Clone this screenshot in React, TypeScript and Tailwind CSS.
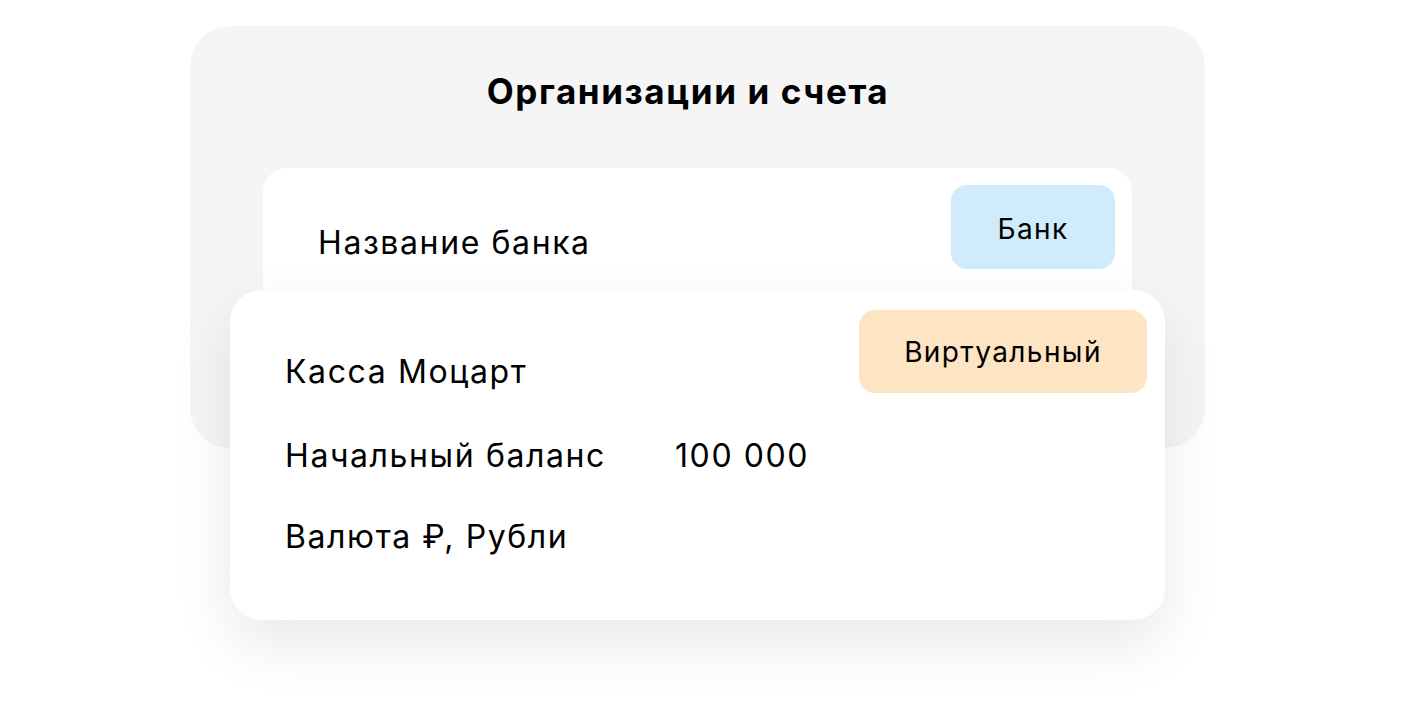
export default function App() {
  return (
    <div
      className="w-[1418px] h-[702px] bg-white overflow-hidden text-black"
      style={{ fontFamily: "Inter, 'Noto Sans', sans-serif" }}
    >
      <div className="ml-[190px] pt-[26px] w-[1015px]">
        {/* grey panel */}
        <div className="h-[422px] bg-[#f5f5f5] rounded-[40px] overflow-hidden flex flex-col items-center">
          <h1 className="mt-[45px] mr-[19px] text-[35px] leading-[40px] font-bold tracking-[1.6px]">
            Организации и счета
          </h1>
          <div className="mt-[57px] w-[869px] h-[300px] bg-white rounded-[24px] pt-[17px] pr-[17px] pl-[55px] flex justify-between items-start">
            <span className="mt-[40px] text-[32px] leading-[36px] tracking-[1.6px]">Название банка</span>
            <div className="w-[164px] h-[84px] pt-[3px] rounded-[16px] bg-[#d0ecfc] flex items-center justify-center text-[28px] tracking-[1.4px]">
              Банк
            </div>
          </div>
        </div>

        {/* front card */}
        <div className="relative ml-[40px] mt-[-158px] w-[935px] h-[330px] bg-white rounded-[32px] shadow-[0_24px_60px_rgba(0,0,0,0.09)] pt-[20px] pr-[18px] pl-[55px] tracking-[1.6px]">
          <div className="flex justify-between items-start">
            <span className="mt-[44px] text-[32px] leading-[36px]">Касса Моцарт</span>
            <div className="w-[288px] h-[83px] rounded-[16px] bg-[#fde4c2] flex items-center justify-center text-[28px] tracking-[1.4px]">
              Виртуальный
            </div>
          </div>
          <div className="mt-[45px] flex text-[32px] leading-[36px]">
            <span className="w-[390px]">Начальный баланс</span>
            <span>100 000</span>
          </div>
          <div className="mt-[45px] text-[32px] leading-[36px]">Валюта ₽, Рубли</div>
        </div>
      </div>
    </div>
  )
}
